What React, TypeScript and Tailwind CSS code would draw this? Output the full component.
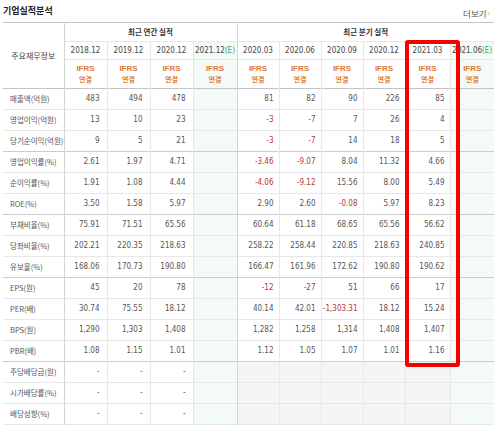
import React from "react";

type Row = { label: string; a: string[]; q: string[]; sep?: boolean; div?: boolean };

const rows: Row[] = [
  { label: "매출액(억원)", a: ["483", "494", "478"], q: ["81", "82", "90", "226", "85"] },
  { label: "영업이익(억원)", a: ["13", "10", "23"], q: ["-3", "-7", "7", "26", "4"] },
  { label: "당기순이익(억원)", a: ["9", "5", "21"], q: ["-3", "-7", "14", "18", "5"], sep: true },
  { label: "영업이익률(%)", a: ["2.61", "1.97", "4.71"], q: ["-3.46", "-9.07", "8.04", "11.32", "4.66"] },
  { label: "순이익률(%)", a: ["1.91", "1.08", "4.44"], q: ["-4.06", "-9.12", "15.56", "8.00", "5.49"] },
  { label: "ROE(%)", a: ["3.50", "1.58", "5.97"], q: ["2.90", "2.60", "-0.08", "5.97", "8.23"], sep: true },
  { label: "부채비율(%)", a: ["75.91", "71.51", "65.56"], q: ["60.64", "61.18", "68.65", "65.56", "56.62"] },
  { label: "당좌비율(%)", a: ["202.21", "220.35", "218.63"], q: ["258.22", "258.44", "220.85", "218.63", "240.85"] },
  { label: "유보율(%)", a: ["168.06", "170.73", "190.80"], q: ["166.47", "161.96", "172.62", "190.80", "190.62"], sep: true },
  { label: "EPS(원)", a: ["45", "20", "78"], q: ["-12", "-27", "51", "66", "17"] },
  { label: "PER(배)", a: ["30.74", "75.55", "18.12"], q: ["40.14", "42.01", "-1,303.31", "18.12", "15.24"] },
  { label: "BPS(원)", a: ["1,290", "1,303", "1,408"], q: ["1,282", "1,258", "1,314", "1,408", "1,407"] },
  { label: "PBR(배)", a: ["1.08", "1.15", "1.01"], q: ["1.12", "1.05", "1.07", "1.01", "1.16"], sep: true },
  { label: "주당배당금(원)", a: ["-", "-", "-"], q: [], div: true },
  { label: "시가배당률(%)", a: ["-", "-", "-"], q: [], div: true },
  { label: "배당성향(%)", a: ["-", "-", "-"], q: [], div: true },
];

const kr = { fontFamily: '"Noto Sans CJK KR", "Noto Sans", sans-serif' };
const num = { fontFamily: '"DejaVu Sans Condensed", "DejaVu Sans", "Noto Sans CJK KR", sans-serif' };

function Val({ v }: { v: string }) {
  const neg = v.startsWith("-") && v !== "-";
  return <span className={neg ? "text-[#b5363a]" : "text-[#555]"}>{v}</span>;
}

export default function App() {
  const annualDates = ["2018.12", "2019.12", "2020.12"];
  const qDates = ["2020.03", "2020.06", "2020.09", "2020.12", "2021.03"];
  const line = "border-[#e8e8e8]";
  return (
    <div className="w-[500px] h-[429px] bg-white overflow-hidden" style={kr}>
      <div className="ml-[3px] w-[491px]">
        <div className="flex items-end justify-between h-[22px] pb-[7px]">
          <span className="text-[9px] font-bold text-[#222] leading-none">기업실적분석</span>
          <span className="text-[8.5px] text-[#555] leading-none mb-[-2px] mr-[4px] flex items-center">
            더보기<span className="text-[8px] text-[#999] ml-[1px]">›</span>
          </span>
        </div>
        <div className="relative">
          <table className="w-[491px] table-fixed border-collapse text-[8px] border-t border-t-[#c4c4c4] border-b border-b-[#c4c4c4]">
            <colgroup>
              <col className="w-[61px]" />
              <col className="w-[43px]" />
              <col className="w-[43px]" />
              <col className="w-[43px]" />
              <col className="w-[44px]" />
              <col className="w-[42px]" />
              <col className="w-[42px]" />
              <col className="w-[42px]" />
              <col className="w-[42px]" />
              <col className="w-[45px]" />
              <col className="w-[44px]" />
            </colgroup>
            <thead>
              <tr className="h-[19px]">
                <th rowSpan={3} className="border-r border-r-[#d4d4d4] text-[8px] font-normal text-[#444]">
                  주요재무정보
                </th>
                <th colSpan={4} className={`border-r border-r-[#d4d4d4] border-b ${line} text-[7.5px] font-bold text-[#333]`}>
                  최근 연간 실적
                </th>
                <th colSpan={6} className={`border-b ${line} text-[7.5px] font-bold text-[#333]`}>
                  최근 분기 실적
                </th>
              </tr>
              <tr className="h-[18px]">
                {annualDates.map((d) => (
                  <th key={d} className={`border-r border-b ${line} font-normal text-[#444]`} style={num}>
                    {d}
                  </th>
                ))}
                <th className={`border-b ${line} border-r border-r-[#d4d4d4] font-normal text-[#444] bg-[#f4faf5] whitespace-nowrap`} style={num}>
                  2021.12<span className="text-[#3aa36b]">(E)</span>
                </th>
                {qDates.map((d) => (
                  <th key={d} className={`border-r border-b ${line} font-normal text-[#444]`} style={num}>
                    {d}
                  </th>
                ))}
                <th className={`border-b ${line} font-normal text-[#444] bg-[#f4faf5] whitespace-nowrap`} style={num}>
                  2021.06<span className="text-[#3aa36b]">(E)</span>
                </th>
              </tr>
              <tr className="h-[29px] border-b border-b-[#c4c4c4]">
                {Array.from({ length: 10 }).map((_, i) => (
                  <th
                    key={i}
                    className={`font-bold leading-[10px] text-[#dc7a3a] ${
                      i === 3 ? "border-r border-r-[#d4d4d4] bg-[#f4faf5]" : i === 9 ? "bg-[#f4faf5]" : `border-r ${line}`
                    }`}
                  >
                    <div className="text-[8px]" style={{ fontFamily: '"Liberation Sans", sans-serif' }}>IFRS</div>
                    <div className="text-[7px]">연결</div>
                  </th>
                ))}
              </tr>
            </thead>
            <tbody>
              {rows.map((r) => (
                <tr key={r.label} className={`h-[21px] border-b ${r.sep ? "border-b-[#cccccc]" : "border-b-[#e8e8e8]"}`}>
                  <td className="border-r border-r-[#d4d4d4] pl-[7px] text-[7.5px] text-[#555] whitespace-nowrap">
                    {r.label}
                  </td>
                  {r.a.map((v, i) => (
                    <td key={i} className={`border-r ${line} text-right pr-[7px]`} style={num}>
                      <Val v={v} />
                    </td>
                  ))}
                  <td className="border-r border-r-[#d4d4d4] bg-[#f4faf5]" />
                  {r.div
                    ? Array.from({ length: 5 }).map((_, i) => (
                        <td key={i} className={`border-r ${line} bg-[#f5f5f5]`} />
                      ))
                    : r.q.map((v, i) => (
                        <td key={i} className={`border-r ${line} text-right pr-[5px] whitespace-nowrap`} style={num}>
                          <Val v={v} />
                        </td>
                      ))}
                  <td className="bg-[#f4faf5]" />
                </tr>
              ))}
            </tbody>
          </table>
          <div className="absolute left-[402px] top-[18px] w-[55px] h-[327px] border-[4px] border-[#f40000] rounded-[3px]" />
        </div>
      </div>
    </div>
  );
}
